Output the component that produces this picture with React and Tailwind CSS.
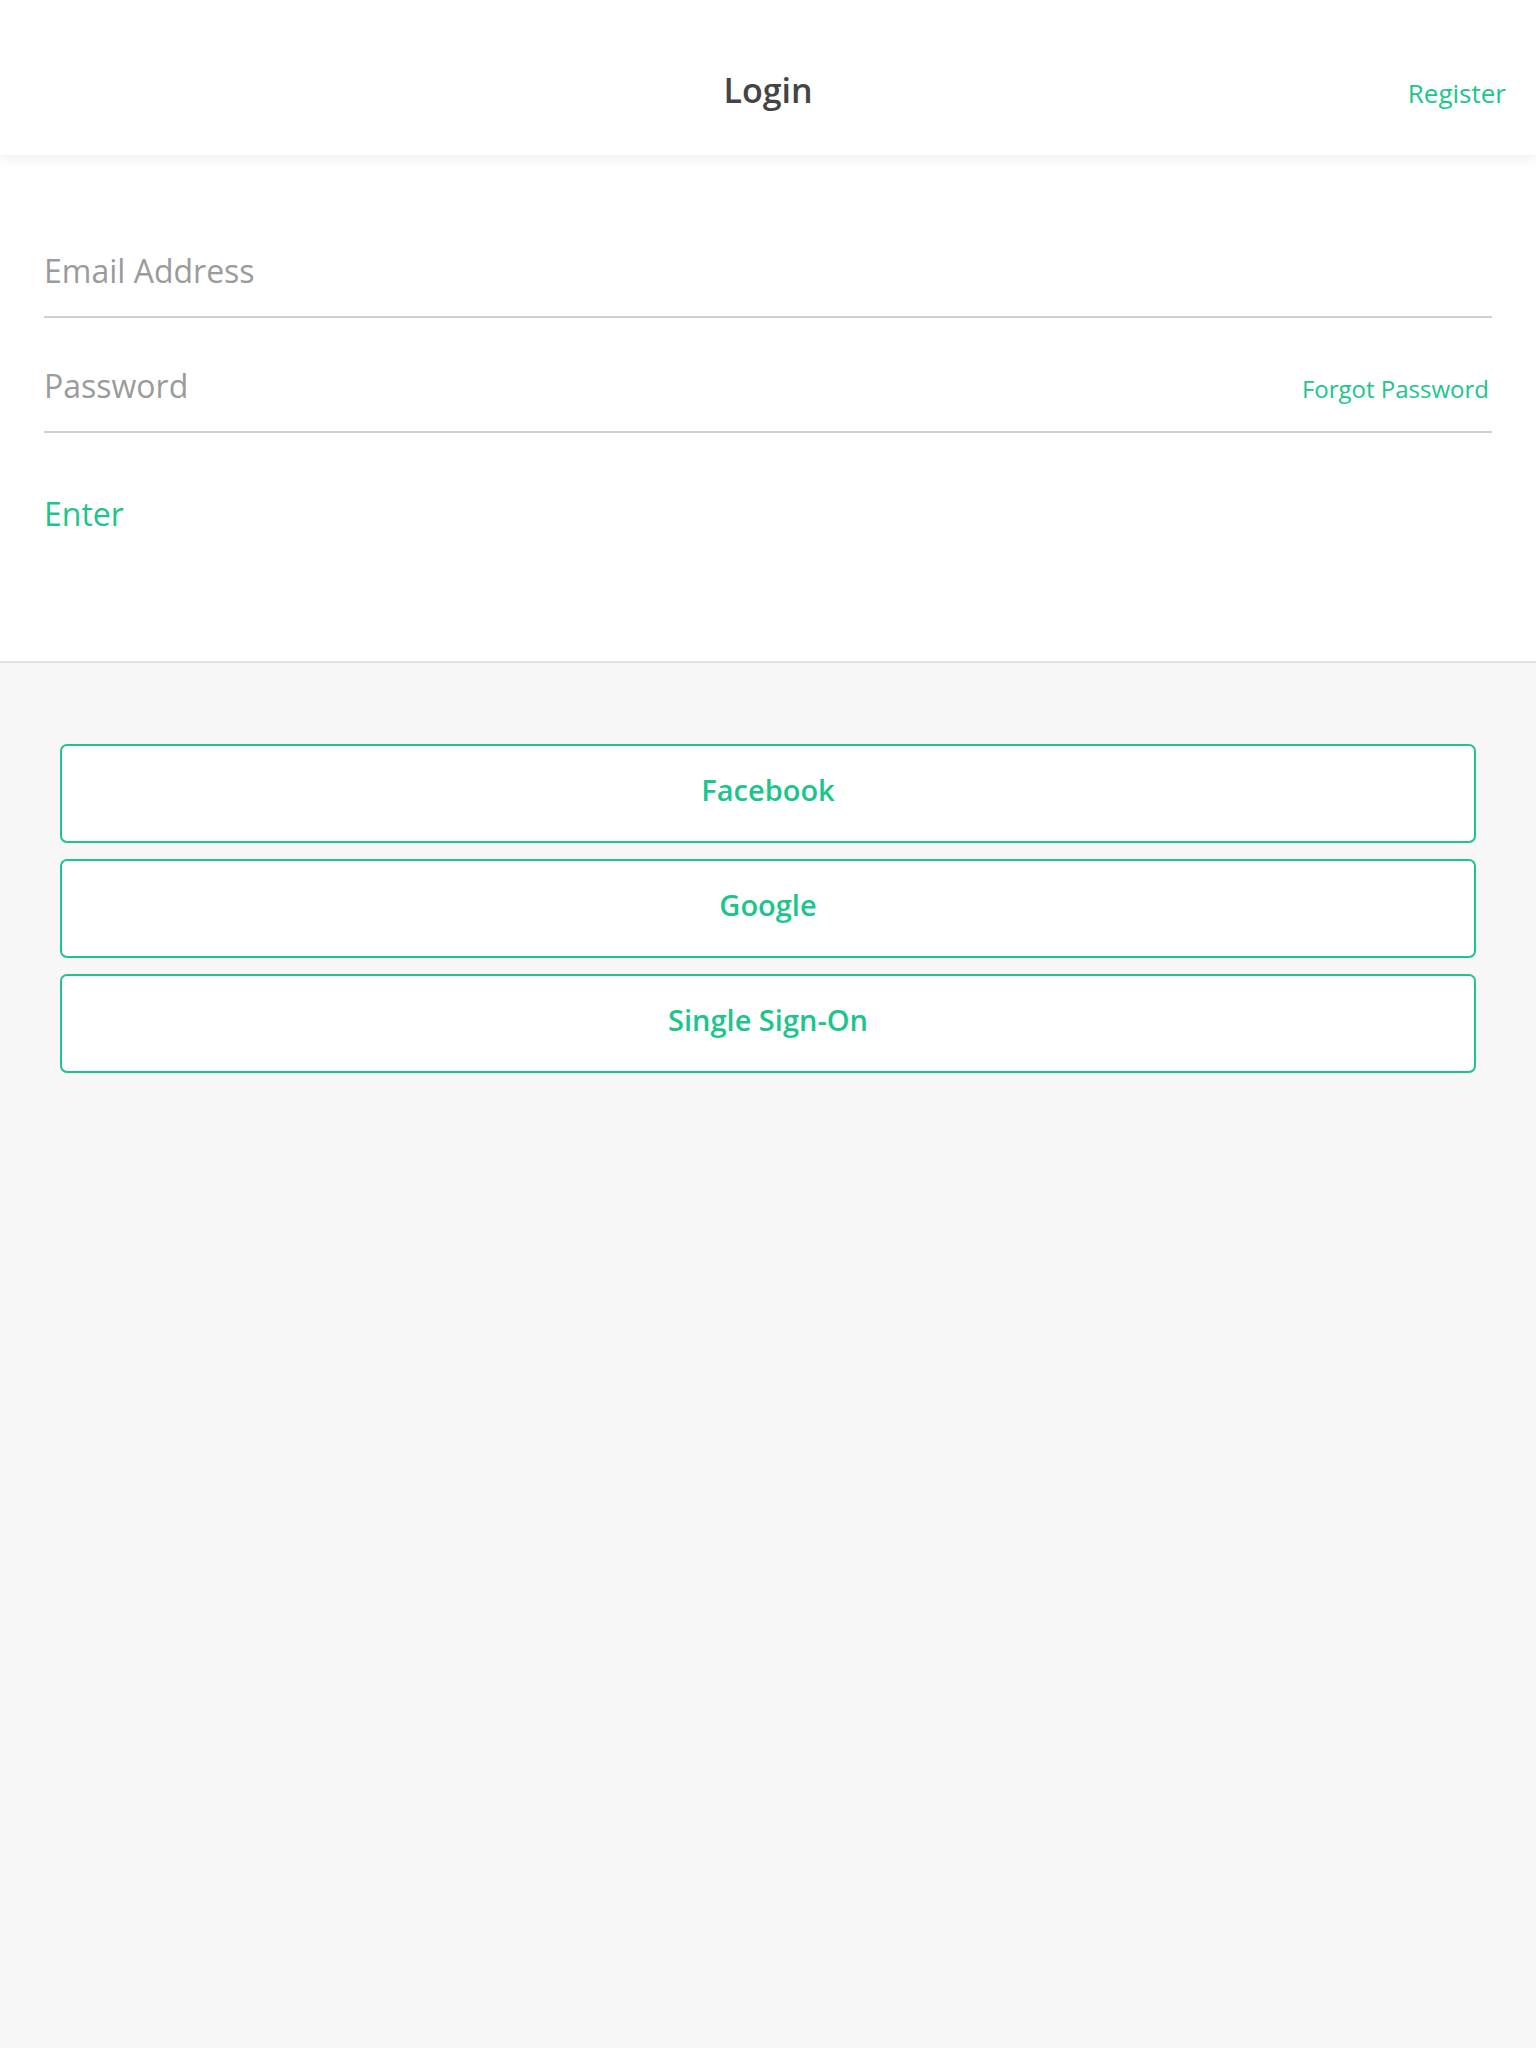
export default function App() {
  const font = { fontFamily: '"Open Sans", "Liberation Sans", sans-serif' };
  return (
    <div className="min-h-screen flex flex-col bg-[#f7f7f7]" style={font}>
      <header className="relative z-10 h-[155px] bg-white shadow-[0_3px_12px_rgba(0,0,0,0.07)] grid grid-cols-[1fr_auto_1fr] items-baseline pt-[70px] px-[30px]">
        <div />
        <div className="text-[34px] leading-[40px] font-semibold text-[#444444]">Login</div>
        <div className="justify-self-end text-[26px] leading-[40px] text-[#1cc68b]">Register</div>
      </header>
      <section className="bg-white border-b-2 border-[#e2e2e2] pt-[96px] pb-[127px] pl-[44px] pr-[44px]">
        <div className="border-b-2 border-[#cfcfcf] pb-[25px]">
          <div className="text-[32px] leading-[40px] text-[#9b9b9b]">Email Address</div>
        </div>
        <div className="border-b-2 border-[#cfcfcf] pt-[48px] pb-[25px] flex items-baseline justify-between">
          <div className="text-[32px] leading-[40px] text-[#9b9b9b]">Password</div>
          <div className="text-[24px] leading-[32px] text-[#1cc68b] pr-[3px]">Forgot Password</div>
        </div>
        <div className="pt-[61px] text-[32px] leading-[40px] text-[#1cc68b]">Enter</div>
      </section>
      <section className="flex-1 px-[60px] pt-[81px] flex flex-col gap-4">
        {["Facebook", "Google", "Single Sign-On"].map((t) => (
          <div
            key={t}
            className="h-[99px] bg-white border-2 border-[#1cc68b] rounded-[7px] flex items-center justify-center pb-[8px] text-[29px] font-semibold text-[#1cc68b]"
          >
            {t}
          </div>
        ))}
      </section>
    </div>
  );
}
